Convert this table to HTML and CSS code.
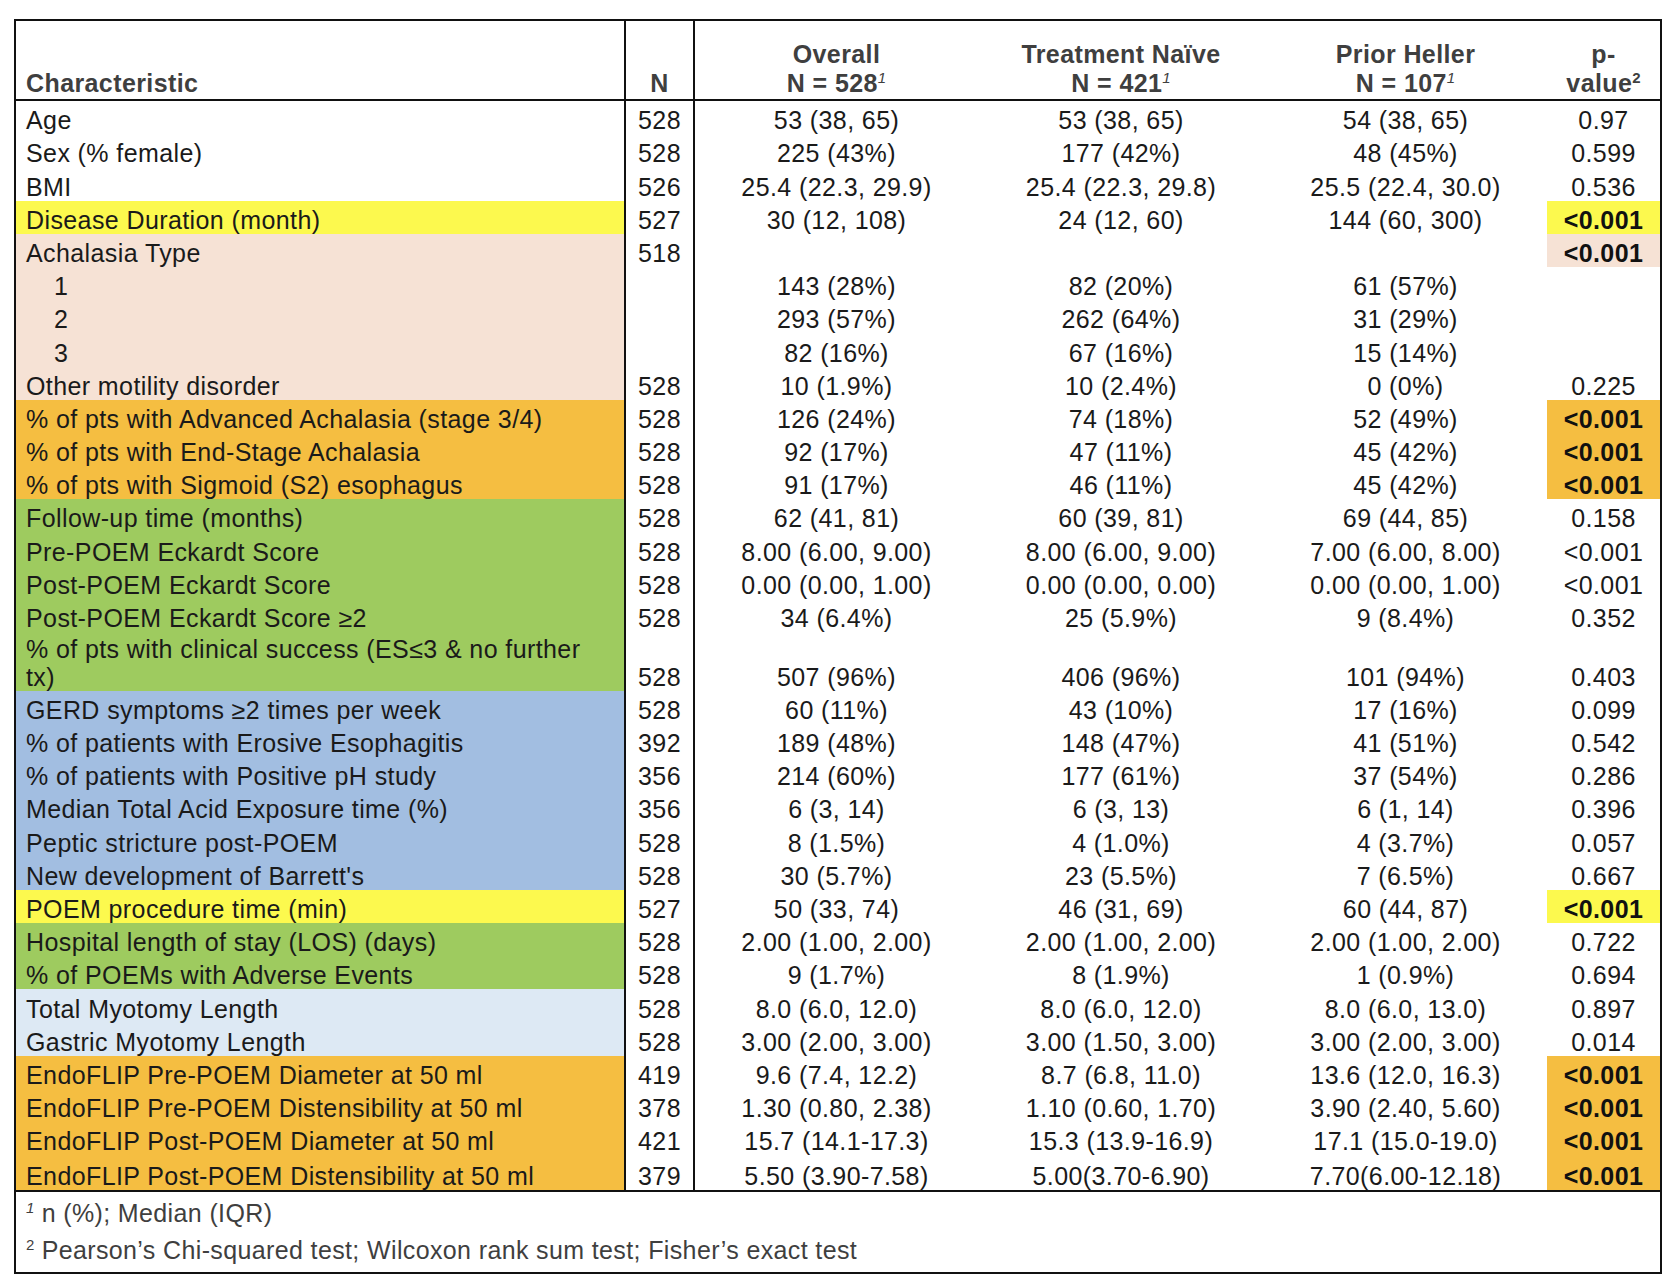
FILE: index.html
```html
<!DOCTYPE html>
<html>
<head>
<meta charset="utf-8">
<title>Table</title>
<link rel="stylesheet" href="styles.css">
</head>
<body>
<div class="page">
<table class="t">
<colgroup>
<col class="c-char"><col class="c-n"><col class="c-grp"><col class="c-grp2"><col class="c-grp3"><col class="c-p">
</colgroup>
<thead>
<tr class="head">
<th class="h-char">Characteristic</th>
<th class="h-n">N</th>
<th class="h-grp">Overall<br>N = 528<sup class="fi">1</sup></th>
<th class="h-grp">Treatment Naïve<br>N = 421<sup class="fi">1</sup></th>
<th class="h-grp">Prior Heller<br>N = 107<sup class="fi">1</sup></th>
<th class="h-p">p-<br>value<sup>2</sup></th>
</tr>
</thead>
<tbody>
<tr><td class="ch">Age</td><td class="n">528</td><td>53 (38, 65)</td><td>53 (38, 65)</td><td>54 (38, 65)</td><td class="p">0.97</td></tr>
<tr><td class="ch">Sex (% female)</td><td class="n">528</td><td>225 (43%)</td><td>177 (42%)</td><td>48 (45%)</td><td class="p">0.599</td></tr>
<tr><td class="ch">BMI</td><td class="n">526</td><td>25.4 (22.3, 29.9)</td><td>25.4 (22.3, 29.8)</td><td>25.5 (22.4, 30.0)</td><td class="p">0.536</td></tr>
<tr><td class="ch yel">Disease Duration (month)</td><td class="n">527</td><td>30 (12, 108)</td><td>24 (12, 60)</td><td>144 (60, 300)</td><td class="p sig yel">&lt;0.001</td></tr>
<tr><td class="ch pch">Achalasia Type</td><td class="n">518</td><td></td><td></td><td></td><td class="p sig pch">&lt;0.001</td></tr>
<tr><td class="ch pch sub">1</td><td class="n"></td><td>143 (28%)</td><td>82 (20%)</td><td>61 (57%)</td><td class="p"></td></tr>
<tr><td class="ch pch sub">2</td><td class="n"></td><td>293 (57%)</td><td>262 (64%)</td><td>31 (29%)</td><td class="p"></td></tr>
<tr><td class="ch pch sub">3</td><td class="n"></td><td>82 (16%)</td><td>67 (16%)</td><td>15 (14%)</td><td class="p"></td></tr>
<tr><td class="ch pch">Other motility disorder</td><td class="n">528</td><td>10 (1.9%)</td><td>10 (2.4%)</td><td>0 (0%)</td><td class="p">0.225</td></tr>
<tr><td class="ch org">% of pts with Advanced Achalasia (stage 3/4)</td><td class="n">528</td><td>126 (24%)</td><td>74 (18%)</td><td>52 (49%)</td><td class="p sig org">&lt;0.001</td></tr>
<tr><td class="ch org">% of pts with End-Stage Achalasia</td><td class="n">528</td><td>92 (17%)</td><td>47 (11%)</td><td>45 (42%)</td><td class="p sig org">&lt;0.001</td></tr>
<tr><td class="ch org">% of pts with Sigmoid (S2) esophagus</td><td class="n">528</td><td>91 (17%)</td><td>46 (11%)</td><td>45 (42%)</td><td class="p sig org">&lt;0.001</td></tr>
<tr><td class="ch grn">Follow-up time (months)</td><td class="n">528</td><td>62 (41, 81)</td><td>60 (39, 81)</td><td>69 (44, 85)</td><td class="p">0.158</td></tr>
<tr><td class="ch grn">Pre-POEM Eckardt Score</td><td class="n">528</td><td>8.00 (6.00, 9.00)</td><td>8.00 (6.00, 9.00)</td><td>7.00 (6.00, 8.00)</td><td class="p">&lt;0.001</td></tr>
<tr><td class="ch grn">Post-POEM Eckardt Score</td><td class="n">528</td><td>0.00 (0.00, 1.00)</td><td>0.00 (0.00, 0.00)</td><td>0.00 (0.00, 1.00)</td><td class="p">&lt;0.001</td></tr>
<tr><td class="ch grn">Post-POEM Eckardt Score ≥2</td><td class="n">528</td><td>34 (6.4%)</td><td>25 (5.9%)</td><td>9 (8.4%)</td><td class="p">0.352</td></tr>
<tr class="two"><td class="ch grn">% of pts with clinical success (ES≤3 &amp; no further<br>tx)</td><td class="n">528</td><td>507 (96%)</td><td>406 (96%)</td><td>101 (94%)</td><td class="p">0.403</td></tr>
<tr><td class="ch blu">GERD symptoms ≥2 times per week</td><td class="n">528</td><td>60 (11%)</td><td>43 (10%)</td><td>17 (16%)</td><td class="p">0.099</td></tr>
<tr><td class="ch blu">% of patients with Erosive Esophagitis</td><td class="n">392</td><td>189 (48%)</td><td>148 (47%)</td><td>41 (51%)</td><td class="p">0.542</td></tr>
<tr><td class="ch blu">% of patients with Positive pH study</td><td class="n">356</td><td>214 (60%)</td><td>177 (61%)</td><td>37 (54%)</td><td class="p">0.286</td></tr>
<tr><td class="ch blu">Median Total Acid Exposure time (%)</td><td class="n">356</td><td>6 (3, 14)</td><td>6 (3, 13)</td><td>6 (1, 14)</td><td class="p">0.396</td></tr>
<tr><td class="ch blu">Peptic stricture post-POEM</td><td class="n">528</td><td>8 (1.5%)</td><td>4 (1.0%)</td><td>4 (3.7%)</td><td class="p">0.057</td></tr>
<tr><td class="ch blu">New development of Barrett's</td><td class="n">528</td><td>30 (5.7%)</td><td>23 (5.5%)</td><td>7 (6.5%)</td><td class="p">0.667</td></tr>
<tr><td class="ch yel">POEM procedure time (min)</td><td class="n">527</td><td>50 (33, 74)</td><td>46 (31, 69)</td><td>60 (44, 87)</td><td class="p sig yel">&lt;0.001</td></tr>
<tr><td class="ch grn">Hospital length of stay (LOS) (days)</td><td class="n">528</td><td>2.00 (1.00, 2.00)</td><td>2.00 (1.00, 2.00)</td><td>2.00 (1.00, 2.00)</td><td class="p">0.722</td></tr>
<tr><td class="ch grn">% of POEMs with Adverse Events</td><td class="n">528</td><td>9 (1.7%)</td><td>8 (1.9%)</td><td>1 (0.9%)</td><td class="p">0.694</td></tr>
<tr><td class="ch lbl">Total Myotomy Length</td><td class="n">528</td><td>8.0 (6.0, 12.0)</td><td>8.0 (6.0, 12.0)</td><td>8.0 (6.0, 13.0)</td><td class="p">0.897</td></tr>
<tr><td class="ch lbl">Gastric Myotomy Length</td><td class="n">528</td><td>3.00 (2.00, 3.00)</td><td>3.00 (1.50, 3.00)</td><td>3.00 (2.00, 3.00)</td><td class="p">0.014</td></tr>
<tr><td class="ch org">EndoFLIP Pre-POEM Diameter at 50 ml</td><td class="n">419</td><td>9.6 (7.4, 12.2)</td><td>8.7 (6.8, 11.0)</td><td>13.6 (12.0, 16.3)</td><td class="p sig org">&lt;0.001</td></tr>
<tr><td class="ch org">EndoFLIP Pre-POEM Distensibility at 50 ml</td><td class="n">378</td><td>1.30 (0.80, 2.38)</td><td>1.10 (0.60, 1.70)</td><td>3.90 (2.40, 5.60)</td><td class="p sig org">&lt;0.001</td></tr>
<tr><td class="ch org">EndoFLIP Post-POEM Diameter at 50 ml</td><td class="n">421</td><td>15.7 (14.1-17.3)</td><td>15.3 (13.9-16.9)</td><td>17.1 (15.0-19.0)</td><td class="p sig org">&lt;0.001</td></tr>
<tr class="last"><td class="ch org">EndoFLIP Post-POEM Distensibility at 50 ml</td><td class="n">379</td><td>5.50 (3.90-7.58)</td><td>5.00(3.70-6.90)</td><td>7.70(6.00-12.18)</td><td class="p sig org">&lt;0.001</td></tr>
</tbody>
<tfoot>
<tr><td class="foot" colspan="6">
<div class="fn"><sup class="fi">1</sup> n (%); Median (IQR)</div>
<div class="fn"><sup>2</sup> Pearson’s Chi-squared test; Wilcoxon rank sum test; Fisher’s exact test</div>
</td></tr>
</tfoot>
</table>
</div>
</body>
</html>
```

FILE: styles.css
```css
html, body {
  margin: 0;
  padding: 0;
  background: #ffffff;
}
body {
  font-family: "Liberation Sans", Arial, Helvetica, sans-serif;
  color: #1a1a1a;
}
.page {
  padding: 19px 0 0 14px;
}
.t {
  border-collapse: collapse;
  table-layout: fixed;
  width: 1646px;
  border: 2px solid #111;
  font-size: 25px;
  letter-spacing: 0.4px;
}
.c-char { width: 610px; }
.c-n { width: 69px; }
.c-grp { width: 284px; }
.c-grp2 { width: 286px; }
.c-grp3 { width: 283px; }
.c-p { width: 114px; }

.head th {
  height: 77px;
  vertical-align: bottom;
  font-weight: bold;
  color: #3f3f3f;
  line-height: 29px;
  padding: 0 0 1px 0;
  text-align: center;
  border-bottom: 2px solid #111;
}
.head .h-char {
  text-align: left;
  padding-left: 10px;
  border-right: 2px solid #111;
}
.head .h-n {
  border-right: 2px solid #111;
}
sup {
  font-size: 15px;
  line-height: 0;
  vertical-align: 9px;
  font-weight: normal;
  letter-spacing: 0;
}
.head sup {
  font-weight: bold;
}
.head sup.fi, sup.fi {
  font-style: italic;
  font-weight: normal;
}

tbody td {
  height: 33.2px;
  padding: 0;
  line-height: 28px;
  vertical-align: bottom;
  text-align: center;
  white-space: nowrap;
}
tbody td.ch {
  text-align: left;
  padding-left: 10px;
  border-right: 2px solid #111;
}
tbody td.n {
  border-right: 2px solid #111;
}
tbody td.sub {
  padding-left: 38px;
}
tbody tr.two td {
  height: 58.7px;
}
tbody tr.last td {
  height: 35px;
}
td.sig {
  font-weight: bold;
  color: #111;
}
.yel { background: #fcf94e; }
.pch { background: #f6e2d5; }
.org { background: #f5be41; }
.grn { background: #9ecb5f; }
.blu { background: #a2bee1; }
.lbl { background: #dde9f4; }

tfoot td.foot {
  border-top: 2px solid #111;
  padding: 3px 0 3px 10px;
  color: #3f3f3f;
  text-align: left;
}
.fn {
  line-height: 37px;
  height: 37px;
  font-size: 25px;
  letter-spacing: 0.37px;
}
.fn sup {
  font-size: 15px;
  vertical-align: 9px;
}
```
